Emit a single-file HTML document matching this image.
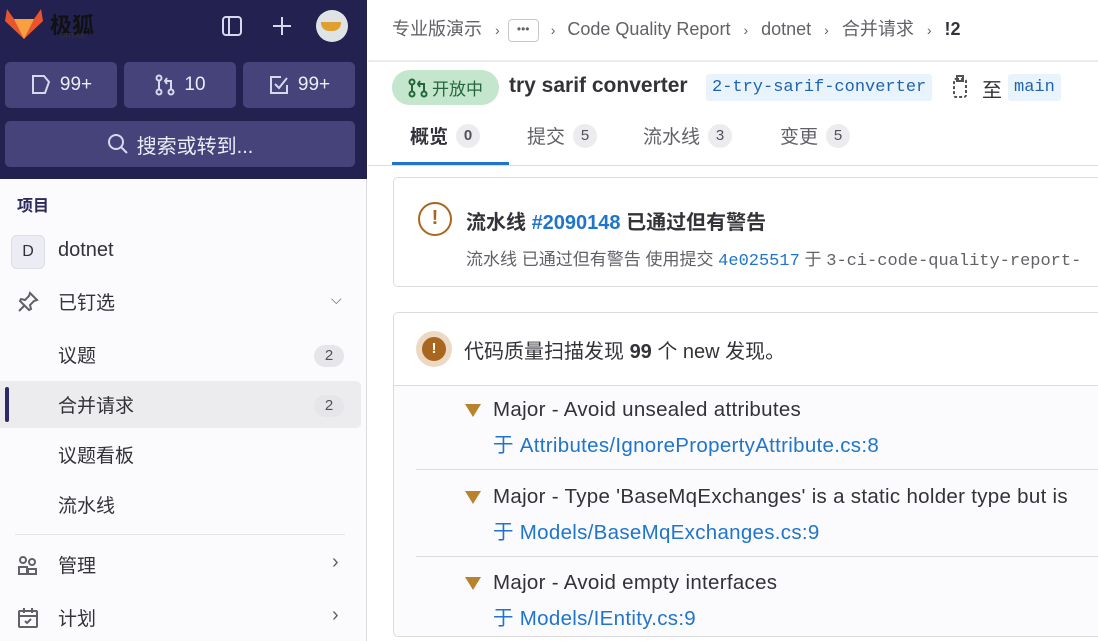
<!DOCTYPE html>
<html><head><meta charset="utf-8"><style>
*{box-sizing:border-box;margin:0;padding:0}
body{width:1098px;height:641px;overflow:hidden;font-family:"Liberation Sans","Noto Sans CJK SC",sans-serif;background:#fff;position:relative;color:#333238}
.abs{position:absolute}
.side{left:0;top:0;width:367px;height:641px;background:#fbfafd;border-right:1px solid #dcdcde}
.top{left:0;top:0;width:367px;height:179px;background:#232150}
.btn{position:absolute;background:#45437a;border-radius:5px;color:#ececf5;font-size:19px;display:flex;align-items:center;justify-content:center;gap:8px}
.nav{position:absolute;left:0;width:367px;font-size:19px;color:#333238}
.badge{position:absolute;right:18px;width:30px;height:22px;border-radius:11px;background:#e6e6ea;font-size:15px;text-align:center;line-height:22px;color:#535158}
.tab{position:absolute;top:122px;font-size:19px;color:#626168;display:flex;align-items:center;gap:8px}
.cnt{background:#ececef;border-radius:12px;height:24px;min-width:24px;padding:0 7px;font-size:15px;line-height:24px;text-align:center;color:#535158}
.mono{font-family:"Liberation Mono",monospace}
.item{position:absolute;left:463px;font-size:20.5px;letter-spacing:0.3px;color:#333238;white-space:nowrap}
.link{color:#1f75cb}
.item.link{color:#1f75cb}
.tri{position:absolute;left:465px;width:0;height:0;border-left:8px solid transparent;border-right:8px solid transparent;border-top:13px solid #b8832d}
</style></head><body>
<div class="abs side"></div>
<div class="abs top"></div>
<svg class="abs" style="left:4px;top:5px" width="40" height="36" viewBox="0 0 40 36"><path d="M3 4 L10 14 L30 14 L37 4 L39 16 L20 34 L1 16 Z" fill="#e8542b"/><path d="M10 14 L20 34 L30 14 Z" fill="#f7a041"/></svg>
<div class="abs" style="left:50px;top:8px;font-size:22px;color:#111;font-weight:bold">极狐</div>
<div class="abs" style="left:60px;top:33px;font-size:7px;color:#333">GITLAB</div>
<svg class="abs" style="left:221px;top:15px" width="22" height="22" viewBox="0 0 22 22" fill="none" stroke="#d8d7ee" stroke-width="2"><rect x="2" y="2" width="18" height="18" rx="3"/><line x1="8" y1="2" x2="8" y2="20"/></svg>
<svg class="abs" style="left:272px;top:16px" width="20" height="20" stroke="#d8d7ee" stroke-width="2"><line x1="10" y1="1" x2="10" y2="19"/><line x1="1" y1="10" x2="19" y2="10"/></svg>
<div class="abs" style="left:316px;top:10px;width:32px;height:32px;border-radius:50%;background:#dfe3e6;overflow:hidden"><div style="margin:12px 0 0 5px;width:20px;height:9px;background:#e0a030;border-radius:0 0 8px 8px"></div></div>
<div class="btn" style="left:5px;top:62px;width:112px;height:46px"><svg width="22" height="22" fill="none" stroke="#d8d7ee" stroke-width="2"><path d="M3 2h11l5 6-4 11H3z"/></svg>99+</div>
<div class="btn" style="left:124px;top:62px;width:112px;height:46px"><svg width="22" height="22" fill="none" stroke="#d8d7ee" stroke-width="2"><circle cx="5" cy="4" r="2.5"/><circle cx="5" cy="18" r="2.5"/><circle cx="17" cy="18" r="2.5"/><path d="M5 7v8M17 15V7h-6M13 4l-2 3 2 3"/></svg>10</div>
<div class="btn" style="left:243px;top:62px;width:112px;height:46px"><svg width="22" height="22" fill="none" stroke="#d8d7ee" stroke-width="2"><path d="M19 11v8H3V3h10"/><path d="M7 10l4 4 8-10"/></svg>99+</div>
<div class="btn" style="left:5px;top:121px;width:350px;height:46px;font-size:20px"><svg width="22" height="22" fill="none" stroke="#d8d7ee" stroke-width="2"><circle cx="9" cy="9" r="7"/><path d="M14 14l6 6"/></svg>搜索或转到...</div>

<div class="abs" style="left:17px;top:192px;font-size:16px;font-weight:bold;color:#2b2a5a">项目</div>
<div class="abs" style="left:11px;top:235px;width:34px;height:34px;border-radius:6px;background:#ececf5;border:1px solid #dcdcea;text-align:center;line-height:32px;font-size:16px">D</div>
<div class="nav" style="left:58px;top:239px;font-size:20px">dotnet</div>
<svg class="abs" style="left:17px;top:291px" width="22" height="22" fill="none" stroke="#626168" stroke-width="2"><path d="M13 2l7 7-3 1-4 4 1 4-2 1-9-9 1-2 4 1 4-4z M7 15l-5 5"/></svg>
<div class="nav" style="left:58px;top:288px">已钉选</div>
<div class="abs" style="left:331px;top:291px;color:#626168;font-size:14px">⌵</div>
<div class="nav" style="left:58px;top:341px">议题</div><div class="badge" style="left:314px;top:345px">2</div>
<div class="abs" style="left:0;top:381px;width:361px;height:47px;background:#ececef;border-radius:0 5px 5px 0"></div>
<div class="abs" style="left:5px;top:387px;width:4px;height:35px;background:#2b2966;border-radius:2px"></div>
<div class="nav" style="left:58px;top:391px">合并请求</div><div class="badge" style="left:314px;top:395px">2</div>
<div class="nav" style="left:58px;top:441px">议题看板</div>
<div class="nav" style="left:58px;top:491px">流水线</div>
<div class="abs" style="left:15px;top:534px;width:330px;height:1px;background:#e4e4e8"></div>
<svg class="abs" style="left:17px;top:554px" width="22" height="22" fill="none" stroke="#626168" stroke-width="2"><circle cx="6" cy="6" r="3"/><circle cx="15" cy="8" r="3"/><path d="M2 20v-7h8v7zM11 20v-5h8v5z"/></svg>
<div class="nav" style="left:58px;top:551px">管理</div><div class="abs" style="left:332px;top:551px;color:#626168;font-size:20px">›</div>
<svg class="abs" style="left:17px;top:607px" width="22" height="22" fill="none" stroke="#626168" stroke-width="2"><rect x="2" y="4" width="18" height="16" rx="1"/><path d="M2 9h18M7 1v5M15 1v5M8 14l2 2 4-4"/></svg>
<div class="nav" style="left:58px;top:604px">计划</div><div class="abs" style="left:332px;top:604px;color:#626168;font-size:20px">›</div>

<div class="abs" style="left:392px;top:15px;font-size:18px;color:#626168;white-space:nowrap">专业版演示 <span style="margin:0 8px;font-size:14px">›</span><span style="display:inline-block;border:1px solid #c8c8cc;border-radius:4px;width:31px;height:23px;text-align:center;line-height:19px;font-size:12px;vertical-align:middle">•••</span><span style="margin:0 12px;font-size:14px">›</span>Code Quality Report <span style="margin:0 8px;font-size:14px">›</span> dotnet <span style="margin:0 8px;font-size:14px">›</span> 合并请求 <span style="margin:0 8px;font-size:14px">›</span> <b style="color:#333238">!2</b></div>
<div class="abs" style="left:368px;top:60px;width:730px;height:2px;background:#ececef"></div>
<div class="abs" style="left:392px;top:70px;width:107px;height:35px;border-radius:18px;background:#c3e6cd;color:#24663b;font-size:17px;display:flex;align-items:center;justify-content:center;gap:4px"><svg width="20" height="20" fill="none" stroke="#24663b" stroke-width="2"><circle cx="4" cy="4" r="2.5"/><circle cx="4" cy="16" r="2.5"/><circle cx="16" cy="16" r="2.5"/><path d="M4 7v6M16 13V6h-5M12 3l-2 3 2 3"/></svg>开放中</div>
<div class="abs" style="left:509px;top:74px;font-size:21px;font-weight:bold">try sarif converter</div>
<div class="abs mono" style="left:706px;top:74px;height:27px;padding:0 6px;background:#e9f3fc;color:#1f64b0;font-size:17px;line-height:27px;border-radius:3px">2-try-sarif-converter</div>
<svg class="abs" style="left:951px;top:75px" width="20" height="24" fill="none" stroke="#535158" stroke-width="2"><rect x="3" y="4" width="12" height="18" rx="2" stroke-dasharray="3 2"/><rect x="6" y="1" width="6" height="5"/></svg>
<div class="abs" style="left:982px;top:74px;font-size:20px">至</div>
<div class="abs mono" style="left:1008px;top:74px;height:27px;padding:0 6px;background:#e9f3fc;color:#1f64b0;font-size:17px;line-height:27px;border-radius:3px">main</div>
<div class="tab" style="left:410px;color:#333238;font-weight:bold">概览 <span class="cnt">0</span></div>
<div class="tab" style="left:527px">提交 <span class="cnt">5</span></div>
<div class="tab" style="left:643px">流水线 <span class="cnt">3</span></div>
<div class="tab" style="left:780px">变更 <span class="cnt">5</span></div>
<div class="abs" style="left:392px;top:162px;width:117px;height:3px;background:#1f75cb"></div>
<div class="abs" style="left:368px;top:165px;width:730px;height:1px;background:#dcdcde"></div>

<div class="abs" style="left:393px;top:177px;width:720px;height:110px;border:1px solid #dcdcde;border-radius:5px"></div>
<div class="abs" style="left:418px;top:202px;width:34px;height:34px;border:2.5px solid #a8661e;border-radius:50%;color:#a8661e;text-align:center;line-height:29px;font-weight:bold;font-size:20px">!</div>
<div class="abs" style="left:466px;top:206px;font-size:20px;font-weight:bold;white-space:nowrap">流水线 <span class="link">#2090148</span> 已通过但有警告</div>
<div class="abs" style="left:466px;top:245px;font-size:17px;color:#626168;white-space:nowrap">流水线 已通过但有警告 使用提交 <span class="mono link" style="font-size:17px">4e025517</span> 于 <span class="mono" style="font-size:17px">3-ci-code-quality-report-</span></div>

<div class="abs" style="left:393px;top:312px;width:720px;height:325px;border:1px solid #dcdcde;border-radius:5px;background:#fbfafd;overflow:hidden"><div style="height:73px;background:#fff;border-bottom:1px solid #dcdcde"></div></div>
<div class="abs" style="left:416px;top:331px;width:36px;height:36px;border-radius:50%;background:#ecd9c4"></div>
<div class="abs" style="left:422px;top:337px;width:24px;height:24px;border-radius:50%;background:#a8661e;color:#fff;text-align:center;line-height:24px;font-weight:bold;font-size:15px">!</div>
<div class="abs" style="left:464px;top:335px;font-size:20px;white-space:nowrap">代码质量扫描发现 <b>99</b> 个 new 发现。</div>
<div class="tri" style="top:404px"></div><div class="item" style="left:493px;top:398px">Major - Avoid unsealed attributes</div>
<div class="item link" style="left:493px;top:428px">于 Attributes/IgnorePropertyAttribute.cs:8</div>
<div class="abs" style="left:416px;top:469px;width:690px;height:1px;background:#dcdcde"></div>
<div class="tri" style="top:491px"></div><div class="item" style="left:493px;top:485px">Major - Type 'BaseMqExchanges' is a static holder type but is</div>
<div class="item link" style="left:493px;top:515px">于 Models/BaseMqExchanges.cs:9</div>
<div class="abs" style="left:416px;top:556px;width:690px;height:1px;background:#dcdcde"></div>
<div class="tri" style="top:577px"></div><div class="item" style="left:493px;top:571px">Major - Avoid empty interfaces</div>
<div class="item link" style="left:493px;top:601px">于 Models/IEntity.cs:9</div>
</body></html>
